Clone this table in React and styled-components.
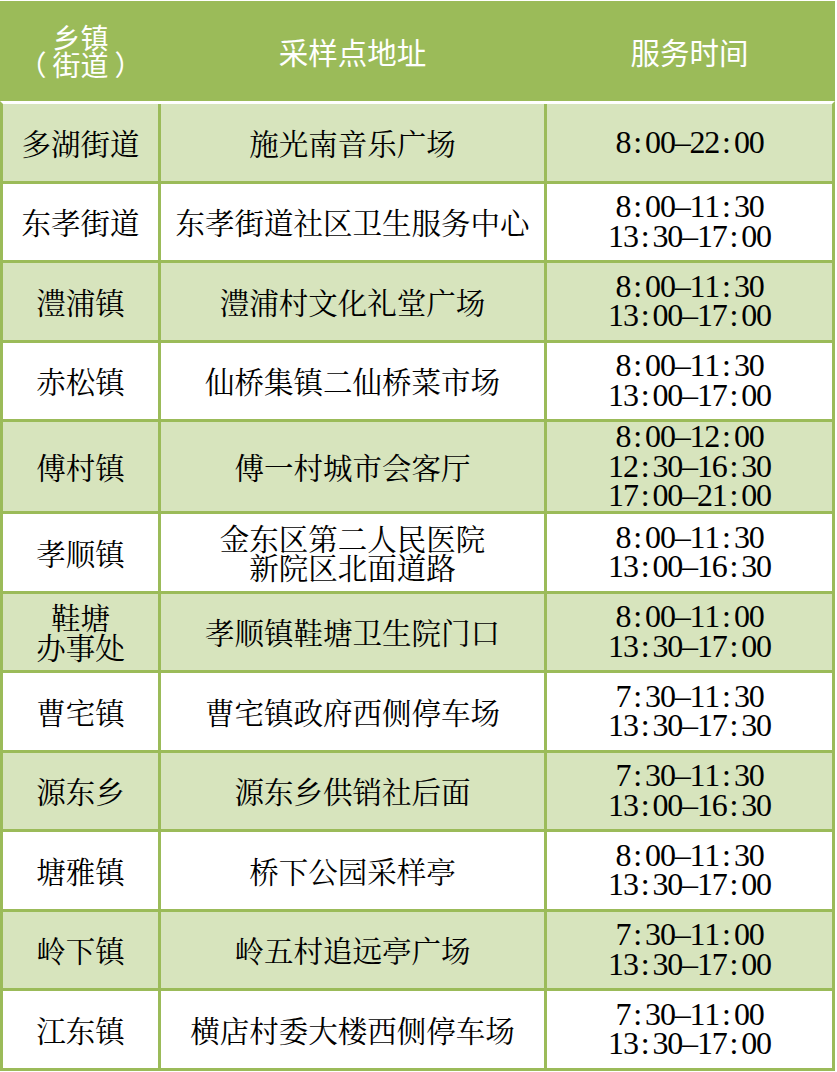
import React from "react";
import styled, { createGlobalStyle } from "styled-components";

const GREEN = "#9bbb59";
const LIGHT = "#d7e4bd";
const CJK = `"Noto Serif CJK SC", "Noto Sans CJK SC", serif`;

const GlobalStyle = createGlobalStyle`
  body {
    margin: 0;
    background: #fff;
    font-family: ${CJK};
  }
`;

const rows = [
  { town: ["多湖街道"], place: ["施光南音乐广场"], time: ["8:00-22:00"] },
  { town: ["东孝街道"], place: ["东孝街道社区卫生服务中心"], time: ["8:00-11:30", "13:30-17:00"] },
  { town: ["澧浦镇"], place: ["澧浦村文化礼堂广场"], time: ["8:00-11:30", "13:00-17:00"] },
  { town: ["赤松镇"], place: ["仙桥集镇二仙桥菜市场"], time: ["8:00-11:30", "13:00-17:00"] },
  { town: ["傅村镇"], place: ["傅一村城市会客厅"], time: ["8:00-12:00", "12:30-16:30", "17:00-21:00"], tall: true },
  { town: ["孝顺镇"], place: ["金东区第二人民医院", "新院区北面道路"], time: ["8:00-11:30", "13:00-16:30"] },
  { town: ["鞋塘", "办事处"], place: ["孝顺镇鞋塘卫生院门口"], time: ["8:00-11:00", "13:30-17:00"] },
  { town: ["曹宅镇"], place: ["曹宅镇政府西侧停车场"], time: ["7:30-11:30", "13:30-17:30"] },
  { town: ["源东乡"], place: ["源东乡供销社后面"], time: ["7:30-11:30", "13:00-16:30"] },
  { town: ["塘雅镇"], place: ["桥下公园采样亭"], time: ["8:00-11:30", "13:30-17:00"] },
  { town: ["岭下镇"], place: ["岭五村追远亭广场"], time: ["7:30-11:00", "13:30-17:00"] },
  { town: ["江东镇"], place: ["横店村委大楼西侧停车场"], time: ["7:30-11:00", "13:30-17:00"] },
];

const Page = styled.div`
  width: 835px;
  padding-top: 1px;
  display: flex;
  flex-direction: column;
`;

const Header = styled.div`
  display: grid;
  grid-template-columns: 155px 383px 285px;
  column-gap: 3px;
  padding: 0 3px;
  height: 100px;
  background: ${GREEN};
`;

const HeadCell = styled.div`
  display: flex;
  flex-direction: column;
  align-items: center;
  justify-content: center;
  color: #fff;
  font-family: "Noto Sans CJK SC", sans-serif;
  font-size: ${(p) => (p.$stack ? "28px" : "29.5px")};
  line-height: 27px;
`;

const ParenWord = styled.span`
  margin: 0 6px;
`;

const Body = styled.div`
  display: grid;
  grid-template-columns: 155px 383px 285px;
  gap: 3px;
  background: ${GREEN};
  border: 3px solid ${GREEN};
  border-top: 3px solid #fff;
`;

const Cell = styled.div`
  height: ${(p) => (p.$tall ? "89px" : "76.5px")};
  background: ${(p) => (p.$shade ? LIGHT : "#fff")};
  display: flex;
  flex-direction: column;
  align-items: center;
  justify-content: center;
  color: #000;
  font-family: ${CJK};
  font-size: 29.5px;
  line-height: 29.5px;
  white-space: nowrap;
`;

const Line = styled.div`
  display: flex;
`;

const Glyph = styled.span`
  display: inline-block;
  width: 14.8px;
  text-align: center;
  font-family: "Liberation Serif", "Times New Roman", serif;
  font-size: 32px;
  line-height: 29.5px;
`;

const TimeLine = ({ text }) => (
  <Line>
    {text.split("").map((ch, i) => (
      <Glyph key={i}>{ch === "-" ? "–" : ch}</Glyph>
    ))}
  </Line>
);

export default function App() {
  return (
    <Page>
      <GlobalStyle />
      <Header>
        <HeadCell $stack>
          <div>乡镇</div>
          <div>
            （<ParenWord>街道</ParenWord>）
          </div>
        </HeadCell>
        <HeadCell>采样点地址</HeadCell>
        <HeadCell>服务时间</HeadCell>
      </Header>
      <Body>
        {rows.map((r, i) => {
          const shade = i % 2 === 0;
          return (
            <React.Fragment key={i}>
              <Cell $shade={shade} $tall={r.tall}>
                {r.town.map((t) => (
                  <Line key={t}>{t}</Line>
                ))}
              </Cell>
              <Cell $shade={shade} $tall={r.tall}>
                {r.place.map((t) => (
                  <Line key={t}>{t}</Line>
                ))}
              </Cell>
              <Cell $shade={shade} $tall={r.tall}>
                {r.time.map((t) => (
                  <TimeLine key={t} text={t} />
                ))}
              </Cell>
            </React.Fragment>
          );
        })}
      </Body>
    </Page>
  );
}
